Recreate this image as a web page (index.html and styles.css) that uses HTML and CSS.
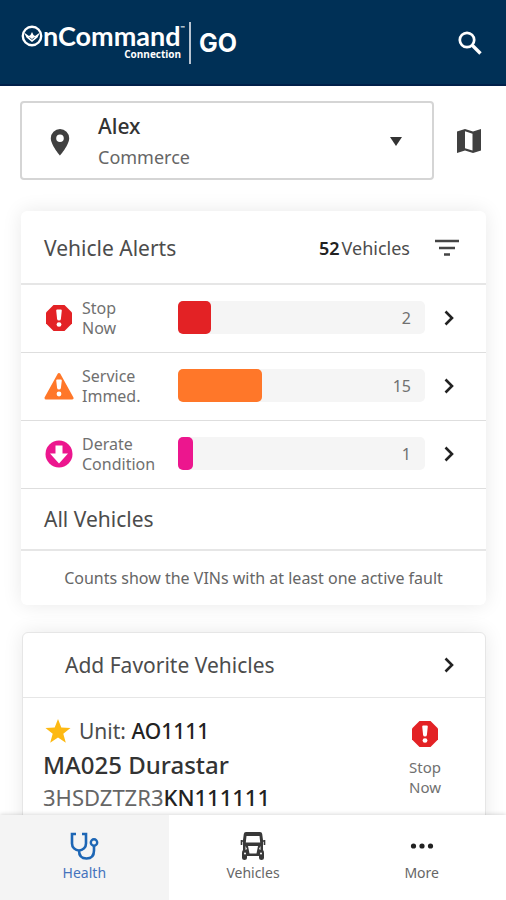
FILE: index.html
```html
<!DOCTYPE html>
<html lang="en">
<head>
<meta charset="utf-8">
<meta name="viewport" content="width=device-width, initial-scale=1">
<title>OnCommand Connection GO</title>
<link rel="stylesheet" href="styles.css">
</head>
<body>
<svg class="sprite" aria-hidden="true">
  <symbol id="stop" viewBox="0 0 28 28"><path fill="#e32225" d="M8.500 1h11L27 8.500v11L19.500 27h-11L1 19.500v-11z"/><path fill="#fff" d="M12.200 5.500h3.600q1 0 1 1l-.9 8.500q-.2 1.500-1.900 1.500t-1.900-1.500l-.9-8.500q0-1 1-1z"/><ellipse cx="14" cy="20.500" rx="2.400" ry="2.200" fill="#fff"/></symbol>
  <symbol id="chevron" viewBox="0 0 12 18"><path d="M2.500 2.500 9 9l-6.500 6.500" fill="none" stroke="#222" stroke-width="2.600"/></symbol>
</svg>
<div class="app">
  <header class="topbar">
    <div class="logo">
      <div class="brand">
        <div class="wordmark"><svg viewBox="0 0 22 22" aria-hidden="true"><circle cx="11" cy="11" r="9.200" fill="none" stroke="#fff" stroke-width="2.400"/><path d="M3 7.500 8 11l1.500-1L11 7l1.500 3 1.500 1 5-3.500-2.500 5L11 17l-5.500-4.500z" fill="#fff"/><path d="m8.500 12.500 2.500 2 2.500-2" fill="none" stroke="#003056" stroke-width=".8"/></svg><span>nCommand</span><small>™</small></div>
        <div class="subbrand">Connection</div>
      </div>
      <div class="go">GO</div>
    </div>
    <button class="icon-button" type="button" aria-label="Search"><svg class="search" viewBox="0 0 24 24"><circle cx="9" cy="9" r="7.200" fill="none" stroke="#fff" stroke-width="2.700"/><path d="m14.500 14.500 8 8" stroke="#fff" stroke-width="3.300"/></svg></button>
  </header>

  <main>
    <div class="location-row">
      <button class="location" type="button">
        <svg class="pin" viewBox="0 0 20 28" aria-hidden="true"><path fill="#404040" fill-rule="evenodd" d="M10 1a9.200 9.200 0 0 0-9.200 9.200C.8 17 10 27.500 10 27.500S19.200 17 19.200 10.200A9.200 9.200 0 0 0 10 1zm0 5.500a3.800 3.800 0 1 1 0 7.600 3.800 3.800 0 0 1 0-7.600z"/></svg>
        <span class="location-text"><strong>Alex</strong><span>Commerce</span></span>
        <svg class="caret" viewBox="0 0 12 9" aria-hidden="true"><path fill="#333" d="M0 0h12L6 9z"/></svg>
      </button>
      <button class="icon-button" type="button" aria-label="Map"><svg class="map" viewBox="0 0 26 26"><path fill="#404040" d="M1 3.500 9 1l8 2.500L25 1v21.500L17 25l-8-2.500L1 25z"/><path fill="#fff" d="m9 3.300 7.500 2.400v16.800L9 20.200z"/></svg></button>
    </div>

    <section class="card alerts">
      <div class="alerts-head">
        <h2>Vehicle Alerts</h2>
        <p><b>52</b><span>Vehicles</span></p>
        <button class="icon-button" type="button" aria-label="Filter"><svg class="filter" viewBox="0 0 26 18"><path d="M1 2h24M5 9h16M10 15.500h6" stroke="#444" stroke-width="2.500"/></svg></button>
      </div>
      <a class="alert" href="#stop-now">
        <svg class="badge" aria-hidden="true"><use href="#stop"/></svg>
        <span class="alert-name">Stop<br>Now</span>
        <span class="track"><span class="fill stop-fill"></span><span class="count">2</span></span>
        <svg class="chevron" aria-hidden="true"><use href="#chevron"/></svg>
      </a>
      <a class="alert" href="#service">
        <svg class="badge wide" viewBox="0 0 30 28" aria-hidden="true"><path d="M15 2.500 28 26H2z" fill="#ff7729" stroke="#ff7729" stroke-width="3" stroke-linejoin="round"/><path fill="#fff" d="M13.200 7.500h3.600q1 0 1 1l-.9 7.500q-.2 1.500-1.900 1.500T13.100 16l-.9-7.500q0-1 1-1z"/><circle cx="15" cy="22" r="2.400" fill="#fff"/></svg>
        <span class="alert-name">Service<br>Immed.</span>
        <span class="track"><span class="fill service-fill"></span><span class="count">15</span></span>
        <svg class="chevron" aria-hidden="true"><use href="#chevron"/></svg>
      </a>
      <a class="alert" href="#derate">
        <svg class="badge" viewBox="0 0 28 28" aria-hidden="true"><circle cx="14" cy="14" r="13.500" fill="#ec168e"/><path fill="#fff" d="M10.500 5.500h7v8H23L14 23.500 5 13.500h5.500z"/></svg>
        <span class="alert-name">Derate<br>Condition</span>
        <span class="track"><span class="fill derate-fill"></span><span class="count">1</span></span>
        <svg class="chevron" aria-hidden="true"><use href="#chevron"/></svg>
      </a>
      <a class="all" href="#all">All Vehicles</a>
      <p class="note">Counts show the VINs with at least one active fault</p>
    </section>

    <section class="card favorites">
      <a class="add" href="#add"><span>Add Favorite Vehicles</span><svg class="chevron" aria-hidden="true"><use href="#chevron"/></svg></a>
      <article class="vehicle">
        <div class="vehicle-info">
          <p class="unit"><svg class="star" viewBox="0 0 26 26" aria-hidden="true"><path fill="#fdb913" d="m13 1 3.300 8.500 9.200.5-7.200 5.800 2.500 9L13 19.600 5.200 24.800l2.500-9L.5 10l9.200-.5z"/></svg><span>Unit: <b>AO1111</b></span></p>
          <h3>MA025 Durastar</h3>
          <p class="vin">3HSDZTZR3<b>KN111111</b></p>
        </div>
        <div class="status"><svg class="badge" aria-hidden="true"><use href="#stop"/></svg><span>Stop<br>Now</span></div>
      </article>
    </section>
  </main>

  <nav class="tabs">
    <a class="tab active" href="#health"><svg viewBox="0 0 30 30" aria-hidden="true"><path d="M7 3H3v9.500a7 7 0 0 0 14 0V3h-4M10 19.500c0 5 2.500 8 7.500 8s7.500-3 7.500-8V15" fill="none" stroke="#1d66b5" stroke-width="2.600"/><circle cx="25" cy="11.500" r="3.200" fill="none" stroke="#1d66b5" stroke-width="2.400"/></svg><span>Health</span></a>
    <a class="tab" href="#vehicles"><svg viewBox="0 0 30 30" aria-hidden="true"><path fill="#383838" fill-rule="evenodd" d="M8 1h14q2 0 2.200 2L25 9v10q1 1 1 3v5q0 2-2.500 2T21 27v-2H9v2q0 2-2.500 2T4 27v-5q0-2 1-3V9l.8-6Q6 1 8 1zM8.500 5l-.7 6.500h14.400L21.500 5zM10 15l1.500 7.500h7L20 15zM7.500 15v4l1.500-1zM22.500 15v4L21 18z"/><path d="M3.500 9v5M26.500 9v5M3 10h3M24 10h3" stroke="#383838" stroke-width="1.600"/><circle cx="7" cy="22.500" r="1" fill="#fff"/><circle cx="23" cy="22.500" r="1" fill="#fff"/></svg><span>Vehicles</span></a>
    <a class="tab" href="#more"><svg viewBox="0 0 30 30" aria-hidden="true"><g fill="#222"><circle cx="6.500" cy="15" r="2.600"/><circle cx="15" cy="15" r="2.600"/><circle cx="23.500" cy="15" r="2.600"/></g></svg><span>More</span></a>
  </nav>
</div>
</body>
</html>
```
FILE: styles.css
```css
* { box-sizing: border-box; }
body { margin: 0; font-family: "Noto Sans", "Open Sans", sans-serif; color: #4c4c4c; background: #fff; }
h2, h3, p { margin: 0; font-weight: 400; }
a { color: inherit; text-decoration: none; }
button { font: inherit; color: inherit; background: none; border: 0; padding: 0; }
svg { display: block; flex: none; }
b { font-weight: 500; color: #222; }
.sprite { position: absolute; width: 0; height: 0; }
.app { height: 100vh; display: flex; flex-direction: column; overflow: hidden; }

.topbar { flex: none; display: flex; justify-content: space-between; align-items: center; padding: 22px 24px 20px 21px; background: #003056; border-bottom: 2px solid #00204a; color: #fff; }
.logo { display: flex; font-family: "Lato", sans-serif; }
.brand { padding-right: 4px; border-right: 2px solid #b8c4d1; height: 42px; }
.wordmark { display: flex; align-items: center; font-size: 27px; line-height: 28px; font-weight: 700; }
.wordmark svg { width: 22px; height: 22px; }
.wordmark small { font-size: 6px; line-height: 8px; align-self: flex-start; padding-top: 2px; }
.subbrand { font-family: "Open Sans", sans-serif; font-size: 10px; line-height: 8px; font-weight: 700; text-align: right; padding-right: 4px; }
.go { font-family: "Inter", sans-serif; font-size: 25px; font-weight: 700; line-height: 42px; padding-left: 8px; }
.icon-button { flex: none; }
.search { width: 24px; height: 24px; }

main { flex: 1; min-height: 0; overflow: hidden; padding: 15px 20px 0; }
.location-row { display: flex; align-items: center; gap: 22px; padding-right: 4px; }
.location { flex: 1; display: flex; align-items: center; height: 79px; padding: 2px 30px 0 28px; border: 2px solid #d5d5d5; border-radius: 4px; text-align: left; }
.pin { width: 20px; height: 28px; }
.location-text { flex: 1; padding-left: 28px; font-size: 18px; line-height: 31px; color: #666; }
.location-text span { display: block; }
.location-text strong { display: block; font-size: 21px; font-weight: 500; color: #333; }
.caret { width: 12px; height: 9px; }
.map { width: 26px; height: 26px; }

.card { background: #fff; border-radius: 6px; box-shadow: 0 0 20px rgba(0, 0, 0, .09); }
.alerts { margin: 31px 0 0 1px; }
.alerts-head { display: flex; align-items: center; height: 74px; padding: 2px 26px 0 23px; border-bottom: 2px solid #e6e6e6; }
.alerts-head h2 { flex: 1; font-size: 21px; }
.alerts-head p { display: flex; gap: 2px; font-size: 18px; padding-right: 24px; }
.alerts-head b { font-weight: 600; }
.filter { width: 26px; height: 18px; }
.alert { display: flex; align-items: center; height: 68px; padding: 0 31px 2px 24px; border-bottom: 1px solid #dedede; }
.badge { width: 28px; height: 28px; }
.badge.wide { width: 30px; margin: 0 -1px; }
.alert-name { width: 96px; margin-left: 9px; font-size: 16px; line-height: 20px; color: #707070; }
.track { flex: 1; display: flex; align-items: center; justify-content: space-between; height: 33px; padding-right: 14px; border-radius: 5px; background: #f5f5f5; font-size: 16px; color: #707070; }
.fill { height: 33px; border-radius: 5px; }
.stop-fill { width: 14%; background: #e32225; }
.service-fill { width: 36%; background: #ff7729; }
.derate-fill { width: 15px; background: #ec168e; }
.chevron { width: 12px; height: 18px; }
.alert .chevron { margin-left: 18px; }
.all { display: block; padding: 0 23px; font-size: 21px; line-height: 60px; border-bottom: 2px solid #e6e6e6; }
.note { text-align: center; font-size: 16px; line-height: 54px; color: #666; }

.favorites { margin: 27px 0 0 2px; border: 1px solid #e6e6e6; }
.add { display: flex; align-items: center; justify-content: space-between; height: 65px; padding: 0 30px 0 42px; border-bottom: 1px solid #e6e6e6; font-size: 21px; }
.vehicle { display: flex; justify-content: space-between; padding: 16px 44px 20px 20px; }
.unit { display: flex; align-items: center; gap: 8px; font-size: 21px; line-height: 34px; }
.star { width: 26px; height: 26px; margin-left: 2px; }
.vehicle h3 { font-size: 24px; line-height: 34px; font-weight: 500; color: #333; }
.vin { font-size: 22px; line-height: 31px; color: #666; }
.status { display: flex; flex-direction: column; align-items: center; gap: 9px; padding-top: 6px; text-align: center; font-size: 15px; line-height: 20px; color: #707070; }

.tabs { position: relative; flex: none; display: grid; grid-template-columns: repeat(3, 1fr); background: #fff; box-shadow: 0 -1px 4px rgba(0, 0, 0, .14); }
.tab { display: flex; flex-direction: column; align-items: center; height: 85px; padding-top: 16px; font-size: 14px; line-height: 24px; color: #666; }
.tab svg { width: 30px; height: 30px; }
.tab.active { background: #f4f4f4; color: #4473bd; }
```
